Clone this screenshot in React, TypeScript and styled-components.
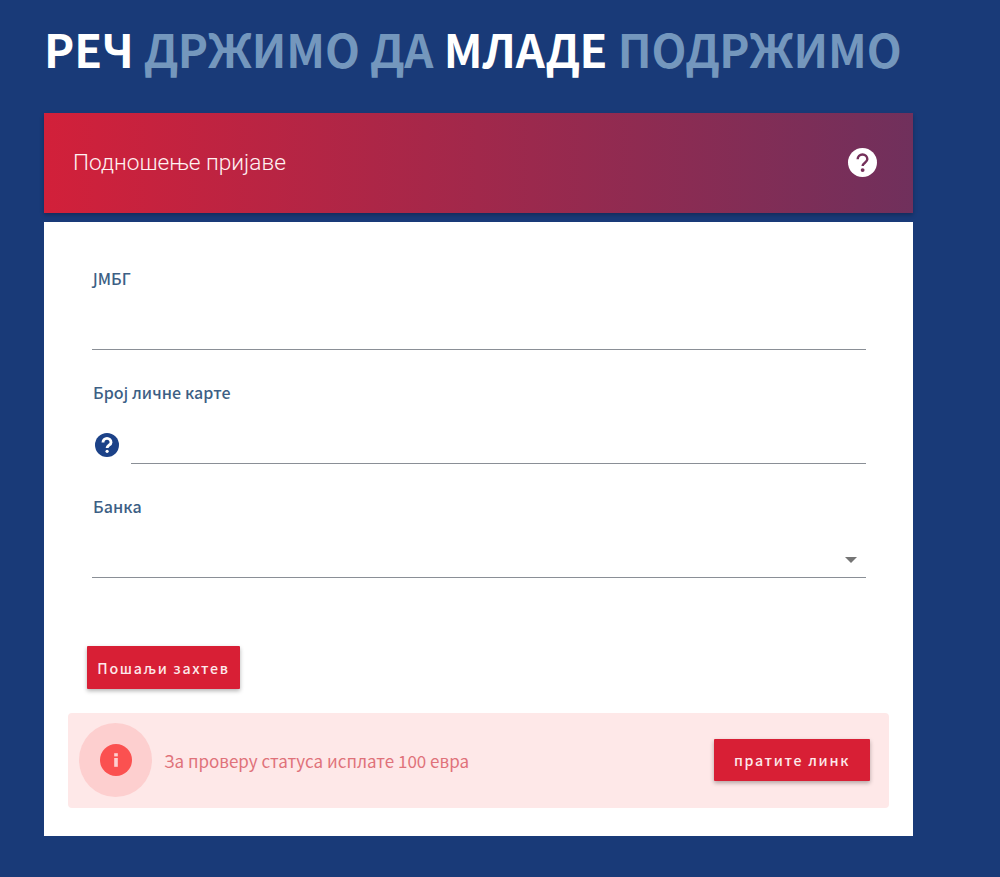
import React from "react";
import styled, { createGlobalStyle } from "styled-components";

const GlobalStyle = createGlobalStyle`
  html, body { margin: 0; padding: 0; background: #193a78; }
  * { box-sizing: border-box; }
  body { font-family: "Noto Sans CJK SC", "Noto Sans", sans-serif; }
`;

const Page = styled.div`
  width: 1000px;
  height: 877px;
  overflow: hidden;
  padding: 0 87px 0 44px;
  background: #193a78;
`;

const Title = styled.h1`
  margin: 0;
  height: 113px;
  padding: 20px 0 0 0;
  font-size: 45.4px;
  line-height: 56px;
  font-weight: 700;
  color: #fff;
  white-space: nowrap;
`;

const Muted = styled.span`
  color: #7497bd;
`;

const Banner = styled.header`
  height: 100px;
  display: flex;
  align-items: center;
  justify-content: space-between;
  padding: 0 36px 1px 29px;
  background: linear-gradient(90deg, #d2203a 0%, #70305c 100%);
  box-shadow: 0 2px 4px rgba(0, 0, 0, 0.25);
`;

const BannerTitle = styled.h2`
  margin: 0;
  font-family: Roboto, sans-serif;
  font-size: 22.7px;
  font-weight: 300;
  color: #fff2f2;
`;

const Card = styled.main`
  height: 614px;
  margin-top: 9px;
  padding: 45px 24px 0;
  background: #fff;
`;

const Field = styled.div`
  height: 114px;
  padding: 0 23px 0 24px;
  display: flex;
  flex-direction: column;
`;

const Label = styled.label`
  height: 22px;
  margin: 0 0 1px 1px;
  font-size: 16px;
  line-height: 22px;
  font-weight: 500;
  letter-spacing: 0.1px;
  color: #3d5f85;
`;

const InputRow = styled.div`
  height: 60px;
  display: flex;
  align-items: flex-end;
  position: relative;
`;

const Line = styled.div`
  flex: 1;
  height: 1px;
  background: #8a8f96;
`;

const HelpSlot = styled.div`
  width: 39px;
  height: 100%;
  padding: 29px 0 0 3px;
`;

const Caret = styled.span`
  position: absolute;
  right: 9px;
  bottom: 15px;
  width: 0;
  height: 0;
  border-left: 6px solid transparent;
  border-right: 6px solid transparent;
  border-top: 6px solid #757575;
`;

const SubmitRow = styled.div`
  padding: 37px 0 0 19px;
`;

const Button = styled.button<{ $w: number; $h: number }>`
  width: ${(p) => p.$w}px;
  height: ${(p) => p.$h}px;
  border: 0;
  padding: 0;
  background: #d81f35;
  color: #fde9ea;
  border-radius: 1px;
  font-family: "Noto Sans CJK SC", "Noto Sans", sans-serif;
  font-size: 14.2px;
  font-weight: 500;
  letter-spacing: 1.7px;
  box-shadow: 0 2px 4px rgba(0, 0, 0, 0.3);
`;

const Alert = styled.section`
  height: 95px;
  margin-top: 24px;
  padding: 0 19px 2px 11px;
  display: flex;
  align-items: center;
  background: #fee8e8;
  border-radius: 4px;
`;

const Halo = styled.div`
  width: 73px;
  height: 74px;
  flex: none;
  border-radius: 50%;
  background: #fdcfcf;
  display: flex;
  align-items: center;
  justify-content: center;
`;

const AlertText = styled.p`
  flex: 1;
  margin: 2px 0 0 12px;
  font-size: 17px;
  color: #e0727a;
`;

const Help = ({ size, bg, fg, weight }: { size: number; bg: string; fg: string; weight: number }) => (
  <svg width={size} height={size} viewBox="0 0 24 24" style={{ display: "block" }}>
    <circle cx="12" cy="12" r="12" fill={bg} />
    <path d="M8 9.4a4 4 0 0 1 8 0c0 2.6-3.9 3-3.9 5.5" fill="none" stroke={fg} strokeWidth={weight} />
    <circle cx="12.1" cy="18.3" r="1.6" fill={fg} />
  </svg>
);

const Info = () => (
  <svg width="32" height="32" viewBox="0 0 32 32" style={{ display: "block" }}>
    <circle cx="16" cy="16" r="16" fill="#fb5150" />
    <rect x="14.2" y="14" width="3.6" height="8.8" fill="#fdd0d0" />
    <rect x="14.2" y="9.2" width="3.6" height="3.2" fill="#fdd0d0" />
  </svg>
);

export default function App() {
  return (
    <>
      <GlobalStyle />
      <Page>
        <Title>
          РЕЧ <Muted>ДРЖИМО ДА</Muted> МЛАДЕ <Muted>ПОДРЖИМО</Muted>
        </Title>
        <Banner>
          <BannerTitle>Подношење пријаве</BannerTitle>
          <Help size={29} bg="#fff" fg="#74305a" weight={2} />
        </Banner>
        <Card>
          <Field>
            <Label>ЈМБГ</Label>
            <InputRow>
              <Line />
            </InputRow>
          </Field>
          <Field>
            <Label>Број личне карте</Label>
            <InputRow>
              <HelpSlot>
                <Help size={24} bg="#1c4288" fg="#fff" weight={2.9} />
              </HelpSlot>
              <Line />
            </InputRow>
          </Field>
          <Field>
            <Label>Банка</Label>
            <InputRow>
              <Line />
              <Caret />
            </InputRow>
          </Field>
          <SubmitRow>
            <Button $w={153} $h={43}>Пошаљи захтев</Button>
          </SubmitRow>
          <Alert>
            <Halo>
              <Info />
            </Halo>
            <AlertText>За проверу статуса исплате 100 евра</AlertText>
            <Button $w={156} $h={42}>пратите линк</Button>
          </Alert>
        </Card>
      </Page>
    </>
  );
}
